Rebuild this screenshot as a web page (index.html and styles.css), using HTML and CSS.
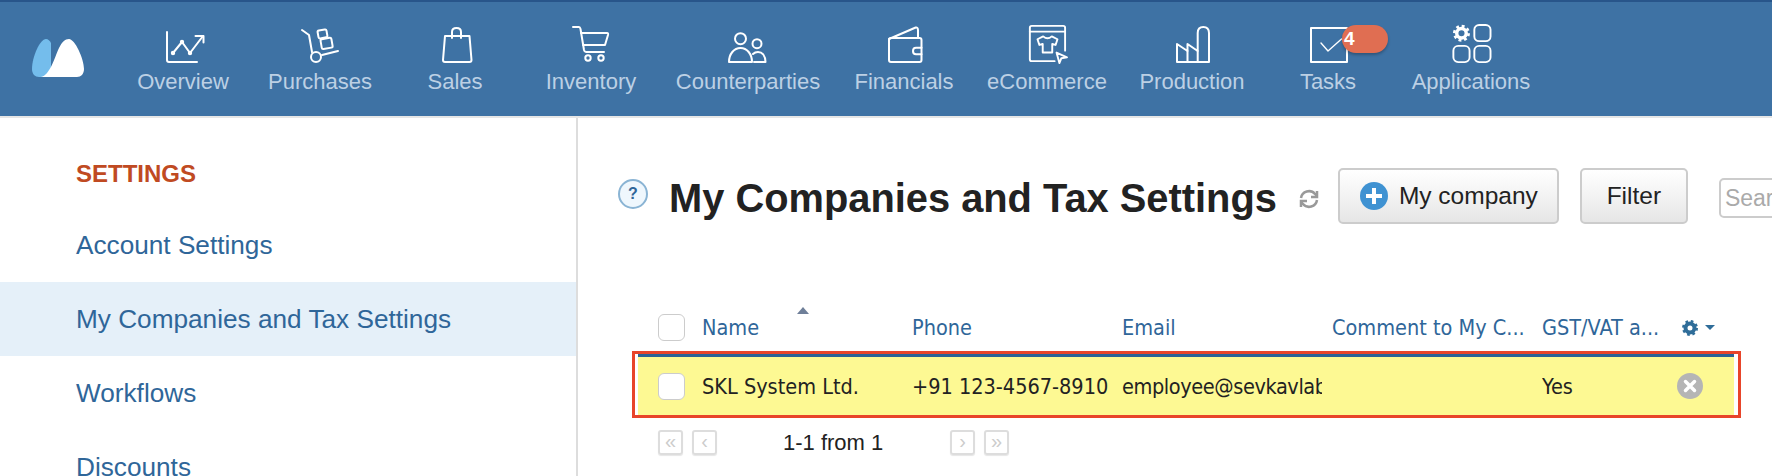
FILE: index.html
```html
<!DOCTYPE html>
<html lang="en">
<head>
    <meta charset="UTF-8">
    <meta name="viewport" content="width=device-width, initial-scale=1.0">
    <title>My Companies and Tax Settings</title>
    <link rel="stylesheet" href="styles.css">
</head>
<body>
    <header class="topbar">
        <svg class="logo" viewBox="0 0 52 38">
            <path d="M14 0C8 0 0 18 0 30c0 5 3 8 7 8h12V4C18 2 16 0 14 0z" fill="#74bdec"/>
            <path d="M9 38C18 36 22 20 27 9c3-6 6-9 10-9 6 0 15 20 15 30 0 5-3 8-7 8z" fill="#fff"/>
        </svg>
        <nav class="nav">
            <a class="nav-item">
                <svg class="nav-icon" viewBox="0 0 60 40"><path d="M14 8v28q0 2 2 2h28"/><path d="M20 29l9-11 8 11 13-17"/><path d="M42.500 12h8v6.500"/><circle cx="20" cy="29" r="1.200"/><circle cx="29" cy="18" r="1.200"/><circle cx="37" cy="29" r="1.200"/></svg>
                <span>Overview</span>
            </a>
            <a class="nav-item">
                <svg class="nav-icon" viewBox="0 0 60 40"><path d="M12 6l7 5 3 17"/><circle cx="26" cy="33" r="5"/><path d="M32 31l16-4"/><rect x="28" y="6" width="9" height="8" rx="1.500" transform="rotate(-10 32 10)"/><rect x="31" y="14.500" width="11" height="10" rx="1.500" transform="rotate(-10 36 19)"/></svg>
                <span>Purchases</span>
            </a>
            <a class="nav-item">
                <svg class="nav-icon" viewBox="0 0 60 40"><path d="M20 12h24.500l2 24q0 2-2 2H20q-2 0-2-2z"/><path d="M27 14V8q0-4 4.500-4t4.500 4v6"/></svg>
                <span>Sales</span>
            </a>
            <a class="nav-item">
                <svg class="nav-icon" viewBox="0 0 60 40"><path d="M12 3h6q1 0 1.500 2l3.500 21q.5 2 2 2h18"/><path d="M20 9h26q1.500 0 1 2l-3 10H22"/><circle cx="27" cy="34" r="2.700"/><circle cx="40" cy="34" r="2.700"/></svg>
                <span>Inventory</span>
            </a>
            <a class="nav-item">
                <svg class="nav-icon" viewBox="0 0 60 40"><circle cx="22.500" cy="14.700" r="5.500"/><circle cx="39" cy="19.700" r="4.500"/><path d="M11 38c0-8 5-14 11.500-14S34 30 34 38z"/><path d="M36 38h11.500c0-6-3-10-7.500-10q-3 0-5 2"/></svg>
                <span>Counterparties</span>
            </a>
            <a class="nav-item">
                <svg class="nav-icon" viewBox="0 0 60 40"><path d="M15 16q0-2 2-2h28.500q2 0 2 2v20q0 2-2 2H17q-2 0-2-2z"/><path d="M15 15L41.700 3.500q2-.5 2.300 2.500v8"/><path d="M47.500 23.700H42q-3 0-3 3.300t3 3.300h5.500"/></svg>
                <span>Financials</span>
            </a>
            <a class="nav-item">
                <svg class="nav-icon" viewBox="0 0 60 42"><path d="M38 39H14q-2 0-2-2V4q0-2 2-2h33q2 0 2 2v24"/><path d="M12 8h37"/><path d="M26 13l-6 3 2 6 3.500-1v9h10v-9l3.500 1 2-6-6-3q-4.500 4-9 0z"/><path d="M40 30l11 5-6 1-2 5z"/></svg>
                <span>eCommerce</span>
            </a>
            <a class="nav-item">
                <svg class="nav-icon" viewBox="0 0 60 40"><path d="M15 38V20l10.500 7v-7l10.200 7V9q0-6 5.600-6T47 9v29z"/><path d="M25.500 27v11M35.700 27v11"/></svg>
                <span>Production</span>
            </a>
            <a class="nav-item">
                <span class="nav-icon-wrap">
                    <svg class="nav-icon" viewBox="0 0 60 40"><path d="M13 4h36v34H13z"/><path class="thin" d="M23 19l7 8 13.500-12"/></svg>
                    <span class="badge">4</span>
                </span>
                <span>Tasks</span>
            </a>
            <a class="nav-item">
                <svg class="nav-icon" viewBox="0 0 60 42"><circle class="gear-body" cx="20" cy="9.700" r="5"/><circle class="gear-teeth" cx="20" cy="9.700" r="7.500"/><rect x="33.500" y="1" width="17" height="17" rx="5"/><rect x="11.500" y="23" width="17" height="17" rx="5"/><rect x="33.500" y="23" width="17" height="17" rx="5"/></svg>
                <span>Applications</span>
            </a>
        </nav>
    </header>

    <div class="page">
        <aside class="sidebar">
            <h3 class="side-title">SETTINGS</h3>
            <a class="side-link">Account Settings</a>
            <a class="side-link active">My Companies and Tax Settings</a>
            <a class="side-link">Workflows</a>
            <a class="side-link">Discounts</a>
        </aside>

        <main class="content">
            <div class="toolbar">
                <span class="help">?</span>
                <h1>My Companies and Tax Settings</h1>
                <svg class="refresh" viewBox="0 0 20 20"><path d="M2 9a8 8 0 0 1 14-4l2 2"/><path d="M18 2v6h-6"/><path d="M18 11a8 8 0 0 1-14 4l-2-2"/><path d="M2 18v-6h6"/></svg>
                <button class="btn btn-add"><span class="plus"></span>My company</button>
                <button class="btn btn-filter">Filter</button>
                <input class="search" type="text" placeholder="Search">
            </div>

            <div class="grid grid-head">
                <span class="check"></span>
                <span class="cell sorted">Name</span>
                <span class="cell">Phone</span>
                <span class="cell">Email</span>
                <span class="cell">Comment to My C...</span>
                <span class="cell cell-last">GST/VAT a...</span>
                <svg class="col-gear" viewBox="0 0 18 16"><circle cx="8" cy="8" r="4.500" fill="none" stroke="#2f6d99" stroke-width="4"/><circle cx="8" cy="8" r="6.500" fill="none" stroke="#2f6d99" stroke-width="3" stroke-dasharray="2.500 2.600"/></svg>
                <span class="caret"></span>
            </div>

            <div class="highlight">
                <div class="grid grid-row">
                    <span class="check"></span>
                    <span class="cell">SKL System Ltd.</span>
                    <span class="cell">+91 123-4567-8910</span>
                    <span class="cell cell-email">employee@sevkavlab.ru</span>
                    <span class="cell"></span>
                    <span class="cell cell-last">Yes</span>
                    <span class="remove">
                        <svg viewBox="0 0 26 26"><path d="M8.500 8.500l9 9M17.500 8.500l-9 9"/></svg>
                    </span>
                </div>
            </div>

            <div class="pager">
                <span class="page-btn">«</span>
                <span class="page-btn">‹</span>
                <span class="page-info">1-1 from 1</span>
                <span class="page-btn">›</span>
                <span class="page-btn">»</span>
            </div>
        </main>
    </div>
</body>
</html>
```

FILE: styles.css
```css
* {
    box-sizing: border-box;
}
html, body {
    height: 100%;
}
body {
    margin: 0;
    font-family: "Liberation Sans", Arial, sans-serif;
    color: #222;
    background-color: #fff;
    overflow: hidden;
}
.topbar {
    display: flex;
    height: 116px;
    background-color: #3e72a4;
    border-top: 2px solid #28558a;
}
.logo {
    width: 52px;
    height: 38px;
    margin: 37px 0 0 32px;
    flex: none;
}
.nav {
    display: grid;
    grid-template-columns: 130px 144px 126px 146px 168px 144px 142px 148px 124px 162px;
    margin-left: 34px;
}
.nav-item {
    display: flex;
    flex-direction: column;
    align-items: center;
    color: #bcd0e4;
    font-size: 22px;
    padding-top: 22px;
    white-space: nowrap;
}
.nav-icon {
    display: block;
    width: 60px;
    height: 40px;
    margin-bottom: 5px;
    overflow: visible;
    fill: none;
    stroke: #fff;
    stroke-width: 2;
    stroke-linecap: round;
    stroke-linejoin: round;
}
.nav-icon .thin {
    stroke-width: 1.400;
}
.nav-icon .gear-body {
    stroke-width: 3.600;
}
.nav-icon .gear-teeth {
    stroke-width: 2.800;
    stroke-linecap: butt;
    stroke-dasharray: 3 2.890;
}
.nav-icon-wrap {
    position: relative;
    display: block;
}
.badge {
    position: absolute;
    top: 1px;
    left: 44px;
    width: 46px;
    height: 28px;
    padding-left: 2px;
    line-height: 27px;
    border-radius: 14px;
    background-color: #e06e52;
    box-shadow: 0 2px 3px rgba(0, 0, 0, 0.25);
    color: #fff;
    font-size: 19px;
    font-weight: bold;
}
.page {
    display: flex;
    height: 360px;
    border-top: 2px solid #e6e6e6;
}
.sidebar {
    width: 578px;
    flex: none;
    border-right: 2px solid #ddd;
    padding-top: 37px;
}
.side-title {
    margin: 0 0 15px 76px;
    height: 38px;
    line-height: 38px;
    font-size: 24px;
    color: #c04a22;
}
.side-link {
    display: block;
    height: 74px;
    line-height: 74px;
    padding-left: 76px;
    font-size: 26.200px;
    color: #2f6699;
}
.side-link.active {
    background-color: #e5f0f9;
}
.content {
    flex: 1;
    min-width: 0;
    overflow: hidden;
    padding: 50px 0 0 40px;
}
.toolbar {
    display: flex;
    align-items: center;
    height: 56px;
    white-space: nowrap;
}
.help {
    width: 30px;
    height: 30px;
    flex: none;
    margin: -5px 21px 0 0;
    border: 2px solid #8ab4d4;
    border-radius: 50%;
    background-color: #eff7fd;
    color: #2f6699;
    font-size: 16px;
    font-weight: bold;
    line-height: 26px;
    text-align: center;
}
h1 {
    margin: 5px 0 0 0;
    font-size: 39.850px;
    color: #222;
}
.refresh {
    width: 20px;
    height: 20px;
    flex: none;
    margin: 6px 19px 0 22px;
    fill: none;
    stroke: #999;
    stroke-width: 2.500;
}
.btn {
    display: flex;
    align-items: center;
    height: 56px;
    flex: none;
    border: 2px solid #ccc;
    border-radius: 5px;
    background: linear-gradient(#fff, #e6e6e6);
    color: #222;
    font-family: "Liberation Sans", Arial, sans-serif;
    font-size: 24.500px;
}
.btn-add {
    width: 221px;
    padding: 0 0 0 20px;
}
.btn-filter {
    width: 108px;
    justify-content: center;
    margin-left: 21px;
}
.plus {
    position: relative;
    width: 28px;
    height: 28px;
    margin-right: 11px;
    border-radius: 50%;
    background-color: #3f92d2;
}
.plus::before, .plus::after {
    content: "";
    position: absolute;
    background-color: #fff;
}
.plus::before {
    left: 6px;
    right: 6px;
    top: 12px;
    height: 4px;
}
.plus::after {
    top: 6px;
    bottom: 6px;
    left: 12px;
    width: 4px;
}
.search {
    width: 120px;
    height: 40px;
    flex: none;
    margin: 4px 0 0 31px;
    padding: 0 4px;
    border: 2px solid #ccc;
    border-radius: 5px;
    font-family: "Liberation Sans", Arial, sans-serif;
    font-size: 23px;
}
.search::placeholder {
    color: #aaa;
}
.grid {
    display: flex;
    align-items: center;
    font-family: "DejaVu Sans Condensed", "DejaVu Sans", sans-serif;
    font-size: 21.500px;
    white-space: nowrap;
}
.grid-head {
    height: 37px;
    margin: 85px 0 0 0;
    padding-left: 40px;
    color: #2f6699;
}
.check {
    width: 27px;
    height: 27px;
    flex: none;
    margin-right: 17px;
    border: 1px solid #ccc;
    border-radius: 6px;
    background-color: #fff;
}
.cell {
    position: relative;
    width: 200px;
    flex: none;
    margin-right: 10px;
    overflow: hidden;
}
.cell-last {
    width: 130px;
}
.cell-email {
    letter-spacing: -0.400px;
}
.sorted {
    overflow: visible;
}
.sorted::before {
    content: "";
    position: absolute;
    left: 95px;
    top: -8px;
    border: 6px solid transparent;
    border-top: 0;
    border-bottom: 7px solid #6f7f99;
}
.col-gear {
    width: 18px;
    height: 16px;
    flex: none;
}
.caret {
    margin-left: 5px;
    border: 5px solid transparent;
    border-bottom: 0;
    border-top: 5px solid #2f6d99;
}
.highlight {
    width: 1109px;
    height: 67px;
    margin: 5px 0 0 14px;
    padding-right: 4px;
    border: 3px solid #e8452a;
    background-color: #fff;
}
.grid-row {
    height: 61px;
    margin-left: 3px;
    padding-left: 20px;
    border-top: 3px solid #2a6496;
    background-color: #fdf993;
}
.remove {
    width: 26px;
    height: 26px;
    flex: none;
    margin-left: -5px;
    border-radius: 50%;
    background-color: #b5b5b5;
}
.remove svg {
    display: block;
    fill: none;
    stroke: #fff;
    stroke-width: 3.500;
    stroke-linecap: round;
}
.pager {
    display: flex;
    align-items: center;
    height: 25px;
    margin: 12px 0 0 40px;
    color: #222;
    font-size: 22px;
}
.page-btn {
    width: 25px;
    height: 25px;
    flex: none;
    margin-right: 9px;
    border: 2px solid #ddd;
    border-radius: 3px;
    box-shadow: 0 1px 1px rgba(0, 0, 0, 0.1);
    color: #ccc;
    font-size: 20px;
    line-height: 19px;
    text-align: center;
}
.page-info {
    width: 224px;
    flex: none;
    padding-left: 57px;
}
```
